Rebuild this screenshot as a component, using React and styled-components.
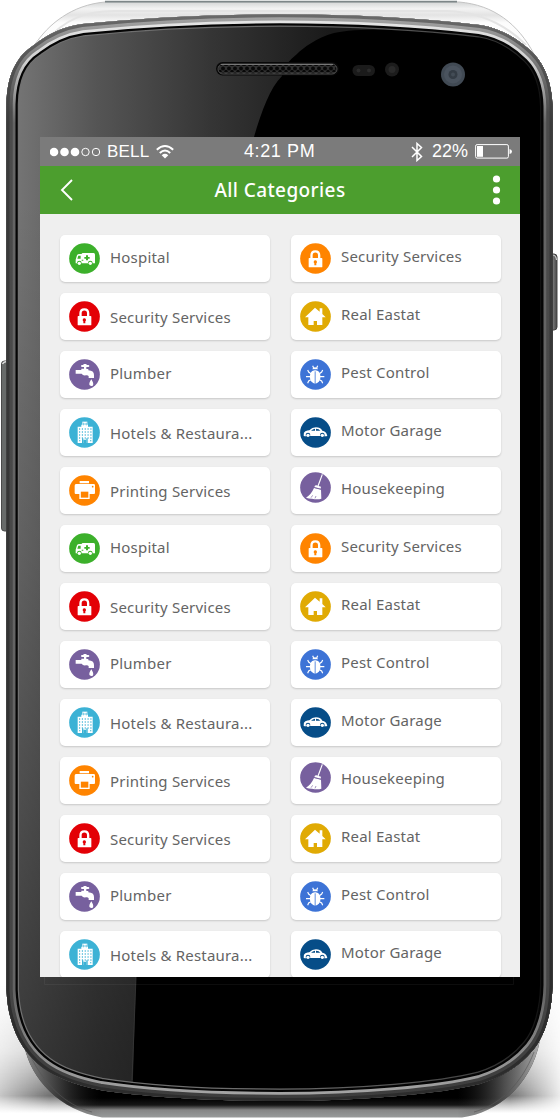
import React from "react";
import styled, { createGlobalStyle } from "styled-components";

const GlobalStyle = createGlobalStyle`
  body { margin: 0; background: #fff; overflow: hidden; }
  * { box-sizing: border-box; }
`;

const Phone = styled.main`
  position: relative;
  width: 560px;
  height: 1120px;
  padding: 137px 40px 143px;
`;

const PhoneArt = styled.svg`
  position: absolute;
  inset: 0;
  display: block;
`;

const Screen = styled.section`
  position: relative;
  display: flex;
  flex-direction: column;
  width: 480px;
  height: 840px;
  overflow: hidden;
  background: #efefef;
`;

const StatusBar = styled.div`
  display: grid;
  grid-template-columns: 194px auto 1fr;
  align-items: center;
  flex: none;
  height: 29px;
  padding: 0 8px 0 10px;
  background: #7b7b7b;
  color: #fff;
  font-family: "Liberation Sans", Arial, sans-serif;
`;

const StatusGroup = styled.div`
  display: flex;
  align-items: center;
  justify-content: ${(p) => (p.$end ? "flex-end" : "flex-start")};
  gap: 7px;
`;

const StatusText = styled.span`
  margin-left: ${(p) => p.$indent || 0}px;
  font-size: ${(p) => p.$size || 18}px;
  line-height: 29px;
  letter-spacing: ${(p) => p.$spacing || 0}px;
  white-space: nowrap;
`;

const Header = styled.header`
  display: grid;
  grid-template-columns: 60px 1fr 60px;
  align-items: center;
  flex: none;
  height: 48px;
  background: #4c9e2e;
`;

const Title = styled.h1`
  margin: 0;
  color: #fff;
  font: 500 19px/48px "Noto Sans", sans-serif;
  letter-spacing: 0.4px;
  text-align: center;
  white-space: nowrap;
`;

const HeaderButton = styled.button`
  display: flex;
  justify-content: ${(p) => (p.$end ? "flex-end" : "flex-start")};
  padding: ${(p) => (p.$end ? "0 19px 0 0" : "0 0 0 20px")};
  border: 0;
  background: none;
`;

const Categories = styled.div`
  display: grid;
  grid-template-columns: 210px 210px;
  grid-auto-rows: 47px;
  gap: 11px 21px;
  padding: 21px 0 0 20px;
`;

const Card = styled.article`
  display: flex;
  align-items: flex-start;
  gap: 10px;
  padding-left: 9px;
  border-radius: 5px;
  background: #fff;
  box-shadow: 0 1px 2px rgba(0, 0, 0, 0.17);
`;

const Badge = styled.svg`
  flex: none;
  width: 31px;
  height: 31px;
  margin-top: ${(p) => p.$top}px;
`;

const Label = styled.span`
  padding-top: ${(p) => p.$top}px;
  color: #646464;
  font: 400 15px/20px "Noto Sans", sans-serif;
  letter-spacing: 0.2px;
  white-space: nowrap;
`;

const BODY =
  "M6.5 104 C7 73 18 55 34 45 C48 34 62 27 82 24 C140 18 210 14.3 280 14.3 C350 14.3 420 18 480 25 C500 28 519 39 533 53 C545 65 552 84 552.5 106 L552.5 985 C552 1012 545 1036 533 1050 C519 1067 500 1078 480 1084 C440 1094 360 1101 280 1101 C210 1101 145 1097 100 1090 C75 1085 55 1077 43 1068 C24 1054 8 1029 6.5 990 Z";

function DeviceArt() {
  return (
    <PhoneArt width="560" height="1120" viewBox="0 0 560 1120" aria-hidden="true">
      <defs>
        <clipPath id="bodyClip"><path d={BODY} /></clipPath>
        <linearGradient id="glass" gradientUnits="userSpaceOnUse" x1="18" y1="0" x2="330" y2="0">
          <stop offset="0" stopColor="#747474" />
          <stop offset=".25" stopColor="#555" />
          <stop offset=".62" stopColor="#353535" />
          <stop offset="1" stopColor="#1a1a1a" />
        </linearGradient>
        <linearGradient id="glassFade" gradientUnits="userSpaceOnUse" x1="0" y1="200" x2="0" y2="1080">
          <stop offset="0" stopColor="#000" stopOpacity="0" />
          <stop offset=".4" stopColor="#000" stopOpacity=".16" />
          <stop offset="1" stopColor="#000" stopOpacity=".52" />
        </linearGradient>
        <linearGradient id="edge" gradientUnits="userSpaceOnUse" x1="18" y1="0" x2="552" y2="0">
          <stop offset="0" stopColor="#707070" />
          <stop offset=".5" stopColor="#6c6c6c" />
          <stop offset=".85" stopColor="#444" />
          <stop offset="1" stopColor="#0a0a0a" />
        </linearGradient>
        <linearGradient id="shine" x1="0" y1="0" x2="0" y2="1">
          <stop offset="0" stopColor="#e8e8e8" />
          <stop offset=".045" stopColor="#cfcfcf" />
          <stop offset=".1" stopColor="#646464" />
          <stop offset=".9" stopColor="#646464" />
          <stop offset="1" stopColor="#a8a8a8" />
        </linearGradient>
        <linearGradient id="metal" x1="0" y1="0" x2="0" y2="1">
          <stop offset="0" stopColor="#a5a5a5" />
          <stop offset=".09" stopColor="#4b4b4b" />
          <stop offset=".9" stopColor="#454545" />
          <stop offset="1" stopColor="#3d3d3d" />
        </linearGradient>
        <linearGradient id="rim" x1="0" y1="0" x2="0" y2="1">
          <stop offset="0" stopColor="#6a6a6a" />
          <stop offset=".1" stopColor="#3b3b3b" />
          <stop offset="1" stopColor="#2c2c2c" />
        </linearGradient>
        <linearGradient id="backTop" x1="0" y1="0" x2="0" y2="1">
          <stop offset="0" stopColor="#d4d6d6" />
          <stop offset=".13" stopColor="#f3f3f3" />
          <stop offset=".25" stopColor="#e3e3e3" />
          <stop offset=".4" stopColor="#fcfcfc" />
          <stop offset="1" stopColor="#fff" />
        </linearGradient>
        <linearGradient id="backBottom" gradientUnits="userSpaceOnUse" x1="0" y1="1098" x2="0" y2="1118">
          <stop offset="0" stopColor="#000" />
          <stop offset=".35" stopColor="#161616" />
          <stop offset=".6" stopColor="#858585" />
          <stop offset="1" stopColor="#9a9c9c" />
        </linearGradient>
        <linearGradient id="backSides" gradientUnits="userSpaceOnUse" x1="24" y1="0" x2="540" y2="0">
          <stop offset="0" stopColor="#bbb" stopOpacity=".75" />
          <stop offset=".07" stopColor="#888" stopOpacity=".4" />
          <stop offset=".15" stopColor="#333" stopOpacity="0" />
          <stop offset=".84" stopColor="#333" stopOpacity="0" />
          <stop offset=".93" stopColor="#999" stopOpacity=".5" />
          <stop offset="1" stopColor="#ddd" stopOpacity=".8" />
        </linearGradient>
        <linearGradient id="shadowV" gradientUnits="userSpaceOnUse" x1="0" y1="985" x2="0" y2="1117">
          <stop offset="0" stopColor="#777" stopOpacity="0" />
          <stop offset=".5" stopColor="#666" stopOpacity=".3" />
          <stop offset=".84" stopColor="#333" stopOpacity=".7" />
          <stop offset=".97" stopColor="#777" stopOpacity="0" />
        </linearGradient>
        <linearGradient id="shadowMask" x1="0" y1="0" x2="1" y2="0">
          <stop offset="0" stopColor="#666" />
          <stop offset=".09" stopColor="#fff" />
          <stop offset=".91" stopColor="#fff" />
          <stop offset="1" stopColor="#222" />
        </linearGradient>
        <mask id="fadeSides"><rect width="560" height="1120" fill="url(#shadowMask)" /></mask>
        <linearGradient id="key" x1="0" y1="0" x2="1" y2="0">
          <stop offset="0" stopColor="#555" />
          <stop offset=".5" stopColor="#7d7d7d" />
          <stop offset="1" stopColor="#444" />
        </linearGradient>
        <pattern id="mesh" width="6" height="6" patternUnits="userSpaceOnUse" x="220" y="66">
          <rect width="6" height="6" fill="#303030" />
          <circle cx="3" cy="2.5" r="2" fill="#080808" />
          <circle cx="0" cy="5.5" r="1.8" fill="#080808" />
          <circle cx="6" cy="5.5" r="1.8" fill="#080808" />
        </pattern>
      </defs>
      <path d="M34 46 C48 24 72 5 105 2 H459 C494 5 518 24 534 54 L480 30 H80 Z" fill="url(#backTop)" stroke="#c4c4c4" strokeWidth="1" />
      <path d="M105 1.6 H457" stroke="#7d8688" strokeWidth="1.8" />
      <path d="M45 42 C65 19 85 11 115 11 H447 C480 12 505 24 526 45" fill="none" stroke="#e4e4e4" strokeWidth="2" />
      <rect y="985" width="560" height="132" fill="url(#shadowV)" mask="url(#fadeSides)" />
      <path d="M24 1045 C31 1080 60 1110 102 1117.5 H462 C500 1112 532 1083 540 1040 Z" fill="url(#backBottom)" />
      <path d="M24 1045 C31 1080 60 1110 102 1117.5 H462 C500 1112 532 1083 540 1040 Z" fill="url(#backSides)" />
      <path d="M30 1055 C44 1084 65 1105 92 1112 M534 1052 C522 1083 500 1105 474 1112" stroke="#555" strokeWidth="1" fill="none" opacity=".6" />
      <rect x="1.5" y="361" width="10" height="170" rx="3" fill="#686b6a" stroke="#4a4a4a" strokeWidth="1" />
      <path d="M2.5 364 Q4 361 7 362" stroke="#ddd" strokeWidth="1.5" fill="none" />
      <rect x="548" y="254" width="9" height="76" rx="3" fill="url(#key)" stroke="#444" strokeWidth="1" />
      <path d="M552.5 255 Q556 255 556.5 260" stroke="#ccc" strokeWidth="1.2" fill="none" />
      <g clipPath="url(#bodyClip)">
        <rect width="560" height="1120" fill="url(#glass)" />
        <rect width="560" height="1120" fill="url(#glassFade)" />
        <path d="M560 20 L420 30 C380 29 350 29 334 33 C316 38 303 48 297 54 C289 61 284 65 282 76 C270 88 262 110 254 137 L136 977 L132 1110 H560 Z" fill="#000" />
        <path d="M136 977 L132 1080" stroke="#393939" strokeWidth=".8" />
        <path d={BODY} fill="none" stroke="url(#edge)" strokeWidth="25" />
        <path d={BODY} fill="none" stroke="#050505" strokeWidth="22.5" />
        <path d={BODY} fill="none" stroke="url(#shine)" strokeWidth="18" />
        <path d={BODY} fill="none" stroke="url(#metal)" strokeWidth="12.5" />
        <path d={BODY} fill="none" stroke="url(#rim)" strokeWidth="6" />
      </g>
      <path d="M44.500 977 V984.500 H513.500 V977" fill="none" stroke="#fff" strokeOpacity=".05" />
      <rect x="216" y="62" width="123" height="13.500" rx="6.7" fill="#080808" />
      <rect x="218" y="64" width="119" height="10" rx="5" fill="url(#mesh)" stroke="#4c4c4c" />
      <path d="M221 64.500 H333" stroke="#777" strokeWidth="1" />
      <rect x="352.500" y="65" width="22.500" height="11" rx="5.500" fill="#1b1b1b" />
      <circle cx="358.500" cy="70.500" r="2" fill="#2b2b2b" />
      <circle cx="369" cy="70.500" r="2" fill="#2b2b2b" />
      <circle cx="392" cy="69.500" r="7" fill="#1c1c1c" />
      <circle cx="392" cy="69.500" r="3.500" fill="#292929" />
      <circle cx="453" cy="74.500" r="12" fill="#414a54" />
      <circle cx="453" cy="74.500" r="9" fill="#4a535e" />
      <circle cx="453" cy="74.500" r="4.500" fill="#343c45" />
      <circle cx="453" cy="74.500" r="2" fill="#434c56" />
    </PhoneArt>
  );
}

const GLYPHS = {
  ambulance: (c) => (
    <>
      <path d="M20 61 V50 L24 37 Q26 33 31 33 H38 Q38 30 42 30 H74 Q78 30 78 35 V61 Z" fill="#fff" />
      <path d="M25 47 L28 38 H35 V47 Z M51 37 h6 v5 h5 v5 h-5 v5 h-6 v-5 h-5 v-5 h5 Z M38 50 h5 v3 h-5 Z" fill={c} />
      <circle cx="31" cy="60" r="7" fill={c} />
      <circle cx="64" cy="60" r="7" fill={c} />
      <circle cx="31" cy="61" r="5" fill="#fff" />
      <circle cx="64" cy="61" r="5" fill="#fff" />
    </>
  ),
  lock: (c) => (
    <>
      <path d="M34.500 48 V37 Q34.500 25 46 25 Q57.500 25 57.500 37 V48" fill="none" stroke="#fff" strokeWidth="7" />
      <rect x="26" y="45" width="41" height="28" rx="2" fill="#fff" />
      <path d="M46 52 a5 5 0 0 1 3 9 v6 h-6 v-6 a5 5 0 0 1 3 -9 Z" fill={c} />
    </>
  ),
  faucet: () => (
    <g fill="#fff">
      <rect x="36" y="18" width="25" height="6" rx="3" />
      <rect x="43" y="15" width="10" height="4" rx="2" />
      <path d="M45 23 h7 v7 h6 v4 Q75 35 75 48 V57 H59 V52 Q57 48 51 49 Q42 51 38 44 H20 V33 H37 V29 H45 Z" />
      <path d="M67 61 Q76 76 71 80 Q67 83 62 79 Q58 74 67 61 Z" />
    </g>
  ),
  hotel: (c) => (
    <>
      <path d="M26 29 H37 V23 H57 V29 H71 V78 H56 V64 H52 V78 H43 V64 H39 V78 H26 Z" fill="#fff" />
      <path d="M40 14 H55 V27 H40 Z" fill="#fff" />
      <path d="M43 17 V25 M52 17 V25 M43 21 H52" stroke={c} strokeWidth="2" />
      {[34, 43, 52, 61].map((y) =>
        [30, 38.5, 47, 55.5, 64].map((x) => <rect key={`${x}-${y}`} x={x} y={y} width="3.500" height="4" fill={c} />)
      )}
      <path d="M30 70h4v3h-4z M63 70h4v3h-4z M43 68h9v10h-9z" fill={c} />
    </>
  ),
  printer: (c) => (
    <>
      <path d="M32 18 H60 V25 H32 Z M21 27 H74 Q78 27 78 31 V54 Q78 57 75 57 H62 V72 H31 V57 H20 Q17 57 17 53 V32 Q17 27 21 27 Z" fill="#fff" />
      <circle cx="71" cy="35" r="2.500" fill={c} />
      <path d="M35.500 50 H58 V68 H35.500 Z" fill={c} />
    </>
  ),
  house: () => (
    <path d="M45 20 L59 32 V22 H67 V39 L77 49 H67 V72 H51 V60 H41 V72 H25 V49 H15 Z" fill="#fff" />
  ),
  bug: (c) => (
    <>
      <path d="M37 31 Q38 25 45 25 Q53 25 54 31 Z" fill="#fff" />
      <path d="M41 27 L38 20 M50 27 L53 20 M33 44 L26 39 L23 33 M58 44 L65 39 L68 33 M31 53 H18 M60 53 H73 M33 62 L26 66 L23 73 M58 62 L65 66 L68 73" stroke="#fff" strokeWidth="3.500" fill="none" />
      <ellipse cx="45.500" cy="53" rx="16" ry="21" fill="#fff" />
      <path d="M45.500 37 V75" stroke={c} strokeWidth="2.500" />
      <path d="M32 36 Q45 29 59 36" stroke={c} strokeWidth="2" fill="none" />
    </>
  ),
  car: (c) => (
    <>
      <path d="M11 56 Q10 46 16 43 Q23 40 28 40 Q36 31 48 31 Q61 31 67 41 Q78 43 80 51 L82 57 Q75 59 70 57 H23 Q15 59 11 56 Z" fill="#fff" />
      <path d="M33 41 Q38 36 45 35 V41 Z M48 35 Q57 35 61 41 H48 Z" fill={c} />
      <circle cx="24" cy="54" r="7" fill={c} />
      <circle cx="67" cy="54" r="7" fill={c} />
      <circle cx="24" cy="55" r="5" fill="#fff" />
      <circle cx="67" cy="55" r="5" fill="#fff" />
    </>
  ),
  broom: (c) => (
    <>
      <path d="M67 7 L54 42" stroke="#fff" strokeWidth="3.500" />
      <path d="M49 40 L63 44 L62 50 L43 46 Q44 39 49 40 Z M42 48 L63 53 L64 80 Q52 84 36 80 Q26 80 18 77 Q34 67 42 48 Z" fill="#fff" />
      <path d="M42 46 L64 52 M38 70 L33 77 M48 72 L45 79" stroke={c} strokeWidth="2" />
    </>
  ),
};

function CategoryIcon({ glyph, color, top }) {
  return (
    <Badge viewBox="0 0 93 93" $top={top} aria-hidden="true">
      <circle cx="46.500" cy="46.500" r="46" fill={color} />
      {GLYPHS[glyph](color)}
    </Badge>
  );
}

const LEFT = {
  hospital: { name: "Hospital", glyph: "ambulance", color: "#3cb02b", text: 12 },
  security: { name: "Security Services", glyph: "lock", color: "#e30006", text: 14 },
  plumber: { name: "Plumber", glyph: "faucet", color: "#77609e", text: 12 },
  hotels: { name: "Hotels & Restaura...", glyph: "hotel", color: "#3cb2d5", text: 14 },
  printing: { name: "Printing Services", glyph: "printer", color: "#ff8400", text: 14 },
};
const RIGHT = {
  security: { name: "Security Services", glyph: "lock", color: "#ff8400", text: 11 },
  estate: { name: "Real Eastat", glyph: "house", color: "#e0aa04", text: 11 },
  pest: { name: "Pest Control", glyph: "bug", color: "#3d73d6", text: 11 },
  garage: { name: "Motor Garage", glyph: "car", color: "#064d88", text: 11 },
  cleaning: { name: "Housekeeping", glyph: "broom", color: "#77609e", text: 11, icon: 5 },
};
const PAIRS = [
  [LEFT.hospital, RIGHT.security],
  [LEFT.security, RIGHT.estate],
  [LEFT.plumber, RIGHT.pest],
  [LEFT.hotels, RIGHT.garage],
  [LEFT.printing, RIGHT.cleaning],
];
const ITEMS = [...PAIRS, ...PAIRS, ...PAIRS.slice(1, 4)].flat();

export default function App() {
  return (
    <>
      <GlobalStyle />
      <Phone>
        <DeviceArt />
        <Screen>
          <StatusBar>
            <StatusGroup>
              <svg width="50" height="10" viewBox="0 0 50 10">
                {[4, 14.5, 25].map((x) => <circle key={x} cx={x} cy="5" r="4.300" fill="#fff" />)}
                {[35.5, 46].map((x) => <circle key={x} cx={x} cy="5" r="3.700" fill="none" stroke="#fff" />)}
              </svg>
              <StatusText $size={17} $spacing={0.2}>BELL</StatusText>
              <svg width="18" height="14" viewBox="0 0 18 14" fill="none" stroke="#fff">
                <path d="M.8 4.800 Q9 -2.700 17.200 4.800" strokeWidth="2" />
                <path d="M3.800 8 Q9 3 14.200 8" strokeWidth="2" />
                <path d="M9 13.500 L5.700 10.200 Q9 7.300 12.300 10.200 Z" fill="#fff" stroke="none" />
              </svg>
            </StatusGroup>
            <StatusText $spacing={0.6}>4:21 PM</StatusText>
            <StatusGroup $end>
              <svg width="12" height="20" viewBox="0 0 12 20" fill="none" stroke="#fff" strokeWidth="1.500">
                <path d="M1 5 L10.500 14.500 L6 18.500 V1.500 L10.500 5.500 L1 15" />
              </svg>
              <StatusText $indent={2}>22%</StatusText>
              <svg width="37" height="15" viewBox="0 0 37 15">
                <rect x=".6" y=".6" width="32.800" height="13.500" rx="1.500" fill="none" stroke="#fff" />
                <rect x="2" y="2" width="6" height="10.800" fill="#fff" />
                <path d="M34.500 5 Q37 5.500 37 7.500 Q37 9.500 34.500 10 Z" fill="#fff" />
              </svg>
            </StatusGroup>
          </StatusBar>
          <Header>
            <HeaderButton aria-label="Back">
              <svg width="13" height="22" viewBox="0 0 13 22" fill="none" stroke="#fff" strokeWidth="1.900">
                <path d="M12 1 L2 11 L12 21" />
              </svg>
            </HeaderButton>
            <Title>All Categories</Title>
            <HeaderButton $end aria-label="More">
              <svg width="9" height="30" viewBox="0 0 9 30" fill="#fff">
                <circle cx="4.500" cy="4" r="3.600" />
                <circle cx="4.500" cy="15" r="3.600" />
                <circle cx="4.500" cy="26" r="3.600" />
              </svg>
            </HeaderButton>
          </Header>
          <Categories>
            {ITEMS.map((item, i) => (
              <Card key={i}>
                <CategoryIcon glyph={item.glyph} color={item.color} top={item.icon || 7.5} />
                <Label $top={item.text}>{item.name}</Label>
              </Card>
            ))}
          </Categories>
        </Screen>
      </Phone>
    </>
  );
}
